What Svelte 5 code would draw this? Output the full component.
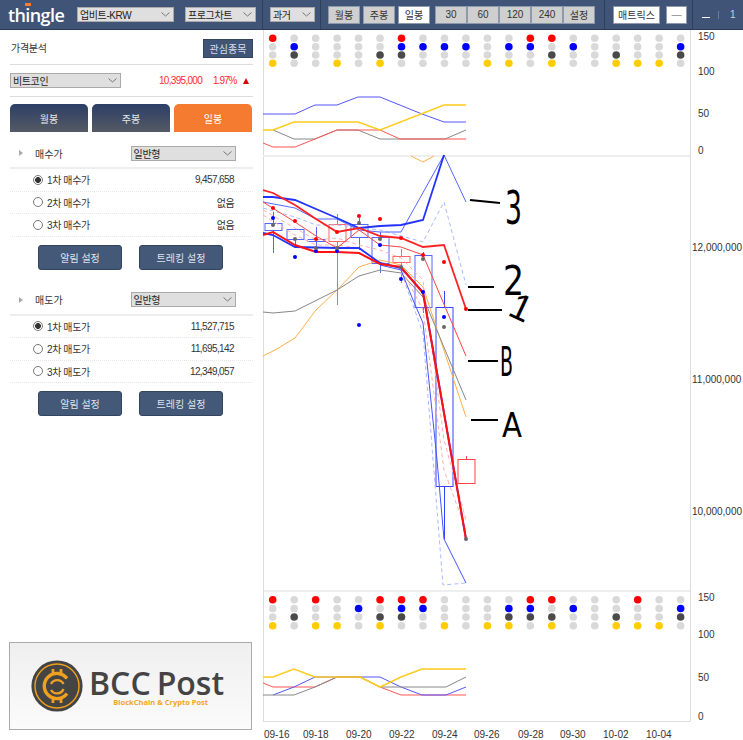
<script>
  const columnX = (i) => 272.7 + 21.47 * i;
  const dotColors = { red: '#ff0000', blue: '#0000ff', dark: '#4a4a4a', yellow: '#ffcc00' };

  // which columns are lit, row by row
  const topDots = [
    { y: 38.3, color: 'red', on: [0, 6, 12, 13] },
    { y: 46.7, color: 'blue', on: [1, 6, 7, 8, 9, 11, 12, 14, 19] },
    { y: 55, color: 'dark', on: [1, 5, 6, 13, 16, 19] },
    { y: 63.3, color: 'yellow', on: [0, 3, 5, 10, 11, 13, 16, 17, 18] },
  ];
  const bottomDots = [
    { y: 599.7, color: 'red', on: [0, 2, 5, 6, 7, 12, 13, 17] },
    { y: 608.5, color: 'blue', on: [4, 6, 7, 11, 12, 14, 19] },
    { y: 617, color: 'dark', on: [1, 5, 6, 11, 12, 13, 16, 19] },
    { y: 625.7, color: 'yellow', on: [0, 2, 3, 5, 8, 10, 11, 13, 16, 17, 18] },
  ];
  const columns = Array.from({ length: 20 }, (_, i) => i);

  const topLines = [
    { c: '#5555ff', w: 1, p: '263,114 295,114 315,105 337,105 358,97 380,97 422,114 444,122 466,122' },
    { c: '#888888', w: 1, p: '273,130 294,139 315,139 337,130 358,130 380,139 445,139 466,130' },
    { c: '#ff5555', w: 1, p: '263,143 273,147 295,147 315,139 337,130 380,130 400,139 466,139' },
    { c: '#ffcc22', w: 1.6, p: '263,130 273,130 294,122 358,122 380,130 444,105 466,105' },
  ];
  const bottomLines = [
    { c: '#ff5555', w: 1, p: '263,683 273,687 315,687 337,677 360,677 380,687 401,695 466,695' },
    { c: '#5555ff', w: 1, p: '273,695 294,687 315,677 380,677 401,687 422,695 446,695 466,687' },
    { c: '#888888', w: 1, p: '263,695 294,695 315,687 337,677 360,677 380,687 446,687 466,677' },
    { c: '#ffcc22', w: 1.6, p: '263,677 273,677 294,669 315,677 360,677 380,687 401,677 422,669 466,669' },
  ];

  const candles = [
    { x: 273, top: 223, bottom: 230, hi: 212, lo: 253, c: '#5566ff' },
    { x: 295, top: 229, bottom: 239, hi: 229, lo: 247, c: '#5566ff' },
    { x: 316, top: 239, bottom: 241, hi: 227, lo: 250, c: '#5566ff' },
    { x: 337, top: 224, bottom: 241, hi: 214, lo: 305, c: '#ff6666' },
    { x: 359, top: 224, bottom: 237, hi: 218, lo: 250, c: '#5566ff' },
    { x: 380, top: 237, bottom: 263, hi: 232, lo: 273, c: '#5566ff' },
    { x: 401, top: 256, bottom: 262, hi: 249, lo: 283, c: '#ff6666' },
    { x: 423, top: 255, bottom: 307, hi: 252, lo: 313, c: '#5566ff' },
    { x: 444, top: 307, bottom: 486, hi: 291, lo: 539, c: '#3344ff' },
    { x: 466, top: 459, bottom: 483, hi: 456, lo: 484, c: '#ff4444' },
  ];

  const mainLines = [
    { c: '#ffb04d', w: 1, p: '263,356 275,350 295,338 316,310 337,290 359,267 380,260 401,265 423,287 466,417' },
    { c: '#ffb04d', w: 1, p: '411,156 423,162 434,156' },
    { c: '#888888', w: 1, p: '263,312 273,313 295,311 337,290 359,276 380,270 401,273 423,297 466,400' },
    { c: '#aabbff', w: 1, d: '4 3', p: '263,208 295,217 316,225 337,225 380,230 423,242 444,202 466,285' },
    { c: '#aabbff', w: 1, d: '4 3', p: '401,272 423,333 443,585 466,583' },
    { c: '#ffb0b0', w: 1, d: '4 3', p: '263,210 295,228 316,240 337,238 359,245 380,250 401,258 423,280 444,440 466,520' },
    { c: '#ffb0b0', w: 1, d: '4 3', p: '263,215 295,235 316,245 337,245 359,248 380,262 401,268 423,310 444,470 466,530' },
    { c: '#5566ff', w: 1, p: '263,202 295,208 316,219 337,219 359,230 380,232 401,232 444,155 466,202' },
    { c: '#4455ff', w: 1, p: '380,265 401,270 413,300 423,323 437,460 444,539 466,583' },
    { c: '#ff4444', w: 1, p: '263,202 295,222 316,236 337,248 359,230 380,245 401,247 423,255 466,356' },
    { c: '#2233ff', w: 1.8, p: '263,197 273,197 295,200 316,209 337,218 359,228 380,226 401,225 423,220 444,155' },
    { c: '#2233ff', w: 1.8, p: '263,233 273,235 295,247 337,248 359,248 380,263 401,268 423,292 466,539' },
    { c: '#ff2222', w: 1.8, p: '263,190 273,193 295,205 316,219 337,232 359,228 380,236 401,238 423,247 444,245 466,309' },
    { c: '#ff1111', w: 2, p: '263,235 273,232 295,245 316,252 337,252 359,253 380,264 401,267 423,293 466,539' },
  ];

  const mainDots = [
    { c: '#ff0000', pts: [[273, 208], [295, 221], [316, 239], [337, 232], [359, 216], [380, 219], [401, 238], [423, 255], [444, 262], [466, 309]] },
    { c: '#0000ff', pts: [[273, 218], [295, 257], [316, 251], [337, 251], [359, 325], [380, 245], [401, 279], [423, 292], [444, 317]] },
    { c: '#666666', pts: [[273, 225], [295, 239], [316, 248], [337, 248], [359, 223], [380, 239], [401, 267], [423, 259], [444, 327], [466, 539]] },
  ];

  // pen annotations on top of the chart
  const marks = [
    { x1: 470, y1: 200, x2: 500, y2: 203 },
    { x1: 468, y1: 287, x2: 494, y2: 287 },
    { x1: 468, y1: 310, x2: 502, y2: 310 },
    { x1: 468, y1: 361, x2: 498, y2: 361 },
    { x1: 471, y1: 420, x2: 498, y2: 420 },
  ];

  const topAxis = [['150', 36], ['100', 71], ['50', 113], ['0', 150]];
  const bottomAxis = [['150', 597], ['100', 634], ['50', 677], ['0', 716]];
  const priceAxis = [['12,000,000', 247], ['11,000,000', 379], ['10,000,000', 511]];
  const dates = [['09-16', 264], ['09-18', 303], ['09-20', 346], ['09-22', 389], ['09-24', 432], ['09-26', 474], ['09-28', 518], ['09-30', 560], ['10-02', 603], ['10-04', 646]];

  const sections = [
    { title: '매수가', rows: [['1차 매수가', '9,457,658'], ['2차 매수가', '없음'], ['3차 매수가', '없음']] },
    { title: '매도가', rows: [['1차 매도가', '11,527,715'], ['2차 매도가', '11,695,142'], ['3차 매도가', '12,349,057']] },
  ];
</script>

{#snippet dropdown(label, cls)}
  <div class="dropdown {cls}">
    <span>{label}</span>
    <svg width="9" height="5" viewBox="0 0 9 5"><path d="M.5.5 4.5 4 8.5.5" fill="none" stroke="#777" /></svg>
  </div>
{/snippet}

{#snippet dotRows(rows)}
  {#each rows as row}
    {#each columns as i}
      <circle cx={columnX(i)} cy={row.y} r="3.8" fill={row.on.includes(i) ? dotColors[row.color] : '#d9d9d9'} />
    {/each}
  {/each}
{/snippet}

{#snippet lines(list)}
  {#each list as l}
    <polyline points={l.p} fill="none" stroke={l.c} stroke-width={l.w} stroke-dasharray={l.d} />
  {/each}
{/snippet}

<div class="app">
  <header>
    <div class="logo-cell">
      <div class="logo">th<span class="i">i<b></b></span>ngle</div>
      {@render dropdown('업비트-KRW', 'exchange')}
      {@render dropdown('프로그차트', 'chart-type')}
    </div>
    <div class="cell past">{@render dropdown('과거', 'past-select')}</div>
    <div class="cell periods">
      <button>월봉</button>
      <button>주봉</button>
      <button class="on">일봉</button>
      <div class="minutes">
        <button>30</button><button>60</button><button>120</button><button>240</button><button>설정</button>
      </div>
    </div>
    <div class="cell matrix">
      <button class="on wide">매트릭스</button>
      <button class="on dash">—</button>
    </div>
    <div class="window">
      <i class="minimize"></i>
      <i class="sep"></i>
      <span>1</span>
    </div>
  </header>

  <main>
    <aside>
      <div class="head">
        <span>가격분석</span>
        <button class="watch">관심종목</button>
      </div>
      <div class="coin">
        {@render dropdown('비트코인', 'coin-select')}
        <span class="price">10,395,000</span>
        <span class="rate">1.97%</span>
        <i class="up"></i>
      </div>
      <div class="tabs">
        <button>월봉</button>
        <button>주봉</button>
        <button class="active">일봉</button>
      </div>

      {#each sections as s}
        <section>
          <div class="section-title">
            <i class="arrow"></i>
            <span>{s.title}</span>
            {@render dropdown('일반형', 'type-select')}
          </div>
          {#each s.rows as r, ri}
            <div class="row">
              <i class="radio" class:checked={ri === 0}></i>
              <span>{r[0]}</span>
              <span class="value">{r[1]}</span>
            </div>
          {/each}
          <div class="actions">
            <button>알림 설정</button>
            <button>트레킹 설정</button>
          </div>
        </section>
      {/each}

      <div class="banner">
        <svg width="52" height="52" viewBox="0 0 52 52">
          <circle cx="26" cy="26" r="25.6" fill="#444" />
          <circle cx="26" cy="26" r="22" fill="none" stroke="#f0a020" stroke-width="1.4" />
          <path d="M36 18.5A12.6 12.6 0 1 0 36 33.5" fill="none" stroke="#f0a020" stroke-width="3.4" />
          <path d="M20 24A7 7 0 0 1 32.5 24M32.5 29A7 7 0 0 1 20 30" fill="none" stroke="#f0a020" stroke-width="2.4" />
          <path d="M22 9v5M30 9v5M22 38v5M30 38v5" stroke="#f0a020" stroke-width="2.8" />
        </svg>
        <div class="brand">
          <div class="brand-name">BCC<span>Post</span></div>
          <div class="brand-sub">BlockChain &amp; Crypto Post</div>
        </div>
      </div>
    </aside>

    <svg class="chart" width="480" height="710" viewBox="263 30 480 710">
      <path d="M263.5 30V721.5H690.5V30" fill="none" stroke="#dcdcdc" />
      <path d="M263 156H690" stroke="#eeeeee" stroke-width="2" />
      <path d="M263 591H690" stroke="#dddddd" />

      {@render dotRows(topDots)}
      {@render lines(topLines)}

      {#each candles as k}
        <path d="M{k.x + 0.5} {k.hi}V{k.top}M{k.x + 0.5} {k.bottom}V{k.lo}" stroke={k.c} />
        <rect x={k.x - 8} y={k.top + 0.5} width="17" height={k.bottom - k.top} fill="none" stroke={k.c} />
      {/each}
      {@render lines(mainLines)}
      {#each mainDots as set}
        {#each set.pts as p}
          <circle cx={p[0]} cy={p[1]} r="2" fill={set.c} />
        {/each}
      {/each}

      {#each marks as m}
        <line x1={m.x1} y1={m.y1} x2={m.x2} y2={m.y2} stroke="#000" stroke-width="2" />
      {/each}
      <g class="hand">
        <text class="three" x="505" y="224" textLength="17" lengthAdjust="spacingAndGlyphs">3</text>
        <text class="two" x="503" y="295" textLength="21" lengthAdjust="spacingAndGlyphs">2</text>
        <text class="one" x="511" y="320" transform="rotate(25 521 307)">1</text>
        <text class="bee" x="500" y="376" textLength="13" lengthAdjust="spacingAndGlyphs">B</text>
        <text class="ay" x="502" y="437" textLength="20" lengthAdjust="spacingAndGlyphs">A</text>
      </g>

      {@render dotRows(bottomDots)}
      {@render lines(bottomLines)}

      <g class="axis">
        {#each topAxis as a}<text x="698" y={a[1] + 4}>{a[0]}</text>{/each}
        {#each bottomAxis as a}<text x="698" y={a[1] + 4}>{a[0]}</text>{/each}
        {#each priceAxis as a}<text x="692" y={a[1] + 4}>{a[0]}</text>{/each}
        {#each dates as d}<text x={d[1]} y="738">{d[0]}</text>{/each}
      </g>
    </svg>
  </main>
</div>

<style>
  :global(body) {
    margin: 0;
    background: #fff;
  }

  .app {
    width: 743px;
    height: 740px;
    overflow: hidden;
    display: flex;
    flex-direction: column;
    font-family: 'Liberation Sans', 'Noto Sans CJK KR', sans-serif;
    font-size: 10px;
    color: #333;
  }

  button {
    font: inherit;
    padding: 0;
    cursor: pointer;
  }

  /* top bar */
  header {
    height: 29px;
    flex: none;
    display: flex;
    background: #3f5476;
    border-bottom: 1px solid #2c3b55;
  }

  .logo-cell {
    width: 262px;
    display: flex;
    align-items: center;
  }

  .logo {
    width: 77px;
    flex: none;
    padding-left: 8px;
    box-sizing: border-box;
    font: 600 18px/1 'Open Sans', sans-serif;
    letter-spacing: -0.6px;
    color: #fff;
  }

  .logo .i {
    position: relative;
  }

  .logo .i b {
    position: absolute;
    left: 0;
    top: 0;
    width: 6px;
    height: 3px;
    background: #f47b30;
  }

  .dropdown {
    display: flex;
    flex: none;
    align-items: center;
    justify-content: space-between;
    box-sizing: border-box;
    height: 15px;
    padding: 0 3px 0 2px;
    background: #dfdfdf;
    border: 1px solid #aaa;
    font-size: 10px;
    letter-spacing: -0.4px;
    color: #222;
  }

  .exchange {
    width: 97px;
  }

  .chart-type {
    width: 71px;
    margin-left: 11px;
  }

  .cell {
    display: flex;
    align-items: center;
    box-sizing: border-box;
    border-left: 1px solid #2f405c;
  }

  .past {
    width: 58px;
    padding-left: 7px;
  }

  .past-select {
    width: 45px;
  }

  .periods {
    width: 284px;
    padding-left: 7px;
    gap: 3px;
  }

  header button {
    height: 18px;
    width: 32px;
    background: #cfcfcf;
    border: 1px solid #8d99ad;
    box-sizing: border-box;
    color: #333;
  }

  header button.on {
    background: #fff;
  }

  .minutes {
    display: flex;
    margin-left: 2px;
  }

  .matrix {
    width: 88px;
    padding-left: 8px;
    gap: 6px;
  }

  header button.wide {
    width: 47px;
  }

  header button.dash {
    width: 21px;
    color: #888;
  }

  .window {
    flex: 1;
    display: flex;
    align-items: center;
    border-left: 1px solid #2f405c;
    color: #c8d0dc;
  }

  .minimize {
    width: 8px;
    height: 1px;
    background: #fff;
    margin: 6px 0 0 9px;
  }

  .sep {
    width: 1px;
    height: 8px;
    background: #6c7d99;
    margin-left: 8px;
  }

  .window span {
    margin-left: 11px;
  }

  main {
    flex: 1;
    display: flex;
    min-height: 0;
  }

  /* left panel */
  aside {
    width: 263px;
    flex: none;
    box-sizing: border-box;
    padding: 0 10px;
    display: flex;
    flex-direction: column;
  }

  .head {
    height: 34px;
    display: flex;
    align-items: center;
    justify-content: space-between;
    padding: 0 0 0 1px;
    letter-spacing: -0.3px;
    border-bottom: 1px solid #ddd;
  }

  .watch {
    width: 50px;
    height: 19px;
    margin-top: 2px;
    background: #3f5476;
    border: 1px solid #33445f;
    color: #d8deea;
  }

  .coin {
    height: 31px;
    display: flex;
    align-items: center;
    border-bottom: 1px solid #ddd;
    color: #ff2a2a;
    letter-spacing: -0.7px;
  }

  .coin-select {
    width: 111px;
  }

  .price {
    margin-left: 38px;
  }

  .rate {
    margin-left: 11px;
    letter-spacing: -1px;
  }

  .up {
    margin-left: 7px;
    border: solid transparent;
    border-width: 0 3.5px 6px;
    border-bottom-color: #e00000;
  }

  .tabs {
    display: flex;
    gap: 4px;
    margin-top: 7px;
  }

  .tabs button {
    width: 78px;
    height: 28px;
    border: 0;
    border-radius: 5px 5px 0 0;
    background: linear-gradient(#2c3f66, #555a64);
    color: #e8e8e8;
  }

  .tabs button.active {
    background: #f47b30;
    color: #fff;
  }

  section {
    margin-top: 9px;
  }

  section + section {
    margin-top: 18px;
  }

  .section-title {
    height: 24px;
    display: flex;
    align-items: center;
    border-bottom: 2px solid #eee;
    padding-bottom: 2px;
  }

  .arrow {
    margin: 0 12px 0 9px;
    border: solid transparent;
    border-width: 3px 0 3px 4px;
    border-left-color: #aaa;
  }

  .type-select {
    width: 105px;
    margin-left: 68px;
  }

  .row {
    height: 22.5px;
    display: flex;
    align-items: center;
    box-sizing: border-box;
    padding: 0 18px 0 23px;
    border-bottom: 1px dotted #e6e6e6;
    letter-spacing: -0.4px;
  }

  .radio {
    box-sizing: border-box;
    width: 10px;
    height: 10px;
    border-radius: 50%;
    border: 1px solid #777;
    background: #fff;
    margin-right: 4px;
  }

  .radio.checked {
    background: radial-gradient(circle, #333 0 2.6px, #fff 3.2px);
  }

  .value {
    margin: 0 1px 0 auto;
    letter-spacing: -0.6px;
  }

  .actions {
    display: flex;
    gap: 17px;
    margin: 8px 0 0 28px;
  }

  .actions button {
    width: 84px;
    height: 25px;
    border: 1px solid #33445f;
    border-radius: 3px;
    background: #445877;
    color: #dfe4ec;
  }

  .banner {
    margin: auto 0 10px -1px;
    width: 243px;
    height: 88px;
    box-sizing: border-box;
    display: flex;
    align-items: center;
    padding-left: 21px;
    gap: 6px;
    border: 1px solid #aaa;
    background: linear-gradient(#efefef, #fbfbfb);
  }

  .brand {
    display: flex;
    flex-direction: column;
    align-items: flex-end;
    margin-top: 1px;
  }

  .brand-name {
    font: 600 32px/30px 'Open Sans', sans-serif;
    color: #444;
  }

  .brand-name span {
    margin-left: 6px;
  }

  .brand-sub {
    margin-right: 16px;
    font: 700 7.5px/8px 'Open Sans', sans-serif;
    color: #f5a623;
  }

  /* chart */
  .chart {
    display: block;
    flex: none;
  }

  .axis text {
    font-family: 'Liberation Sans', sans-serif;
    font-size: 10px;
    fill: #333;
  }

  .hand text {
    font-family: 'DejaVu Sans', sans-serif;
    fill: #000;
  }

  .three { font-size: 46px; }
  .two { font-size: 40px; }
  .hand text.one { font-family: 'Liberation Sans', sans-serif; font-size: 37px; }
  .bee { font-size: 40px; }
  .ay { font-size: 34px; }
</style>
